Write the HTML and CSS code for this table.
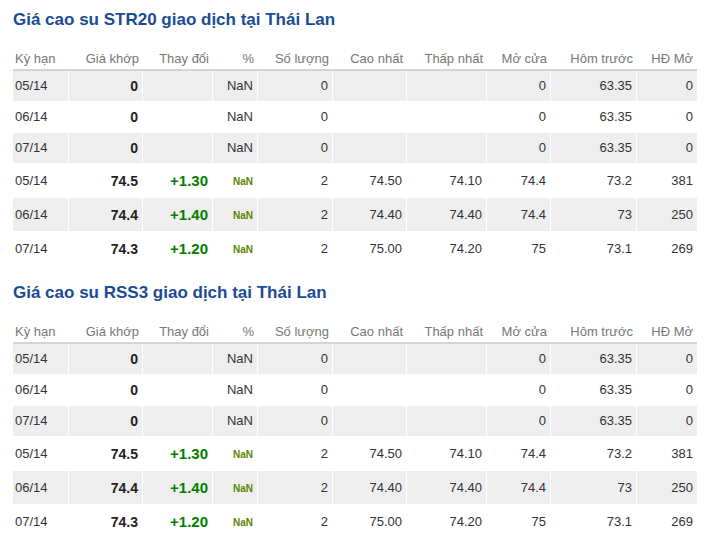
FILE: index.html
```html
<!DOCTYPE html>
<html lang="vi">
<head>
<meta charset="utf-8">
<title>Giá cao su</title>
<link rel="stylesheet" href="styles.css">
</head>
<body>
<div class="page">
  <section class="board">
    <h2 class="board-title">Giá cao su STR20 giao dịch tại Thái Lan</h2>
    <table class="quotes">
      <colgroup>
        <col class="c1"><col class="c2"><col class="c3"><col class="c4"><col class="c5">
        <col class="c6"><col class="c7"><col class="c8"><col class="c9"><col class="c10">
      </colgroup>
      <thead>
        <tr><th class="l">Kỳ hạn</th><th>Giá khớp</th><th>Thay đổi</th><th>%</th><th>Số lượng</th><th>Cao nhất</th><th>Thấp nhất</th><th>Mở cửa</th><th>Hôm trước</th><th>HĐ Mở</th></tr>
      </thead>
      <tbody>
        <tr class="alt"><td class="l">05/14</td><td class="b">0</td><td></td><td>NaN</td><td>0</td><td></td><td></td><td>0</td><td>63.35</td><td>0</td></tr>
        <tr><td class="l">06/14</td><td class="b">0</td><td></td><td>NaN</td><td>0</td><td></td><td></td><td>0</td><td>63.35</td><td>0</td></tr>
        <tr class="alt"><td class="l">07/14</td><td class="b">0</td><td></td><td>NaN</td><td>0</td><td></td><td></td><td>0</td><td>63.35</td><td>0</td></tr>
        <tr class="up"><td class="l">05/14</td><td class="b">74.5</td><td><span class="chg">+1.30</span></td><td><span class="pct">NaN</span></td><td>2</td><td>74.50</td><td>74.10</td><td>74.4</td><td>73.2</td><td>381</td></tr>
        <tr class="up alt"><td class="l">06/14</td><td class="b">74.4</td><td><span class="chg">+1.40</span></td><td><span class="pct">NaN</span></td><td>2</td><td>74.40</td><td>74.40</td><td>74.4</td><td>73</td><td>250</td></tr>
        <tr class="up"><td class="l">07/14</td><td class="b">74.3</td><td><span class="chg">+1.20</span></td><td><span class="pct">NaN</span></td><td>2</td><td>75.00</td><td>74.20</td><td>75</td><td>73.1</td><td>269</td></tr>
      </tbody>
    </table>
  </section>
  <section class="board">
    <h2 class="board-title">Giá cao su RSS3 giao dịch tại Thái Lan</h2>
    <table class="quotes">
      <colgroup>
        <col class="c1"><col class="c2"><col class="c3"><col class="c4"><col class="c5">
        <col class="c6"><col class="c7"><col class="c8"><col class="c9"><col class="c10">
      </colgroup>
      <thead>
        <tr><th class="l">Kỳ hạn</th><th>Giá khớp</th><th>Thay đổi</th><th>%</th><th>Số lượng</th><th>Cao nhất</th><th>Thấp nhất</th><th>Mở cửa</th><th>Hôm trước</th><th>HĐ Mở</th></tr>
      </thead>
      <tbody>
        <tr class="alt"><td class="l">05/14</td><td class="b">0</td><td></td><td>NaN</td><td>0</td><td></td><td></td><td>0</td><td>63.35</td><td>0</td></tr>
        <tr><td class="l">06/14</td><td class="b">0</td><td></td><td>NaN</td><td>0</td><td></td><td></td><td>0</td><td>63.35</td><td>0</td></tr>
        <tr class="alt"><td class="l">07/14</td><td class="b">0</td><td></td><td>NaN</td><td>0</td><td></td><td></td><td>0</td><td>63.35</td><td>0</td></tr>
        <tr class="up"><td class="l">05/14</td><td class="b">74.5</td><td><span class="chg">+1.30</span></td><td><span class="pct">NaN</span></td><td>2</td><td>74.50</td><td>74.10</td><td>74.4</td><td>73.2</td><td>381</td></tr>
        <tr class="up alt"><td class="l">06/14</td><td class="b">74.4</td><td><span class="chg">+1.40</span></td><td><span class="pct">NaN</span></td><td>2</td><td>74.40</td><td>74.40</td><td>74.4</td><td>73</td><td>250</td></tr>
        <tr class="up"><td class="l">07/14</td><td class="b">74.3</td><td><span class="chg">+1.20</span></td><td><span class="pct">NaN</span></td><td>2</td><td>75.00</td><td>74.20</td><td>75</td><td>73.1</td><td>269</td></tr>
      </tbody>
    </table>
  </section>
</div>
</body>
</html>
```

FILE: styles.css
```css
html, body {
  margin: 0;
  padding: 0;
  background: #ffffff;
}

body {
  font-family: "Liberation Sans", Arial, sans-serif;
  font-size: 13px;
  color: #333333;
}

.page {
  padding: 10px 0 0 13px;
}

.board {
  margin-bottom: 17px;
}

.board-title {
  margin: 0 0 17px 0;
  font-size: 17px;
  line-height: 20px;
  font-weight: bold;
  color: #1a4c96;
}

.quotes {
  table-layout: fixed;
  width: 684px;
  border-collapse: separate;
  border-spacing: 0;
}

.c1 { width: 56px; }
.c2 { width: 74px; }
.c3 { width: 70px; }
.c4 { width: 45px; }
.c5 { width: 75px; }
.c6 { width: 74px; }
.c7 { width: 80px; }
.c8 { width: 64px; }
.c9 { width: 86px; }
.c10 { width: 60px; }

.quotes th {
  font-weight: normal;
  color: #777777;
  text-align: right;
  line-height: 16px;
  padding: 4px 4px 2px 2px;
  border-bottom: 2px solid #d4d4d4;
  white-space: nowrap;
}

.quotes td {
  text-align: right;
  line-height: 16px;
  height: 16px;
  padding: 7px 4px 7px 2px;
  border-right: 1px solid #ffffff;
  border-bottom: 1px solid #ffffff;
  white-space: nowrap;
}

.quotes td:last-child {
  border-right: 0;
}

.quotes .l {
  text-align: left;
}

.quotes tr.alt td {
  background: #eeeeee;
}

.quotes tr.up td {
  padding-top: 9px;
  padding-bottom: 8px;
}

.quotes .b {
  font-size: 14px;
  font-weight: bold;
  color: #222222;
}

.chg {
  font-size: 15px;
  line-height: 16px;
  font-weight: bold;
  color: #008000;
  vertical-align: top;
}

.pct {
  font-size: 10px;
  line-height: 10px;
  font-weight: bold;
  color: #5a8700;
}
```
